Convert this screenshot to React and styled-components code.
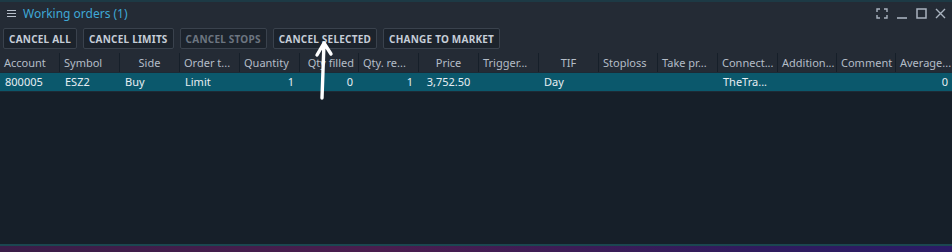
import React from 'react';
import styled, { createGlobalStyle } from 'styled-components';

const Global = createGlobalStyle`
	html, body { margin: 0; padding: 0; background: #161f29; }
	body { font-family: "Noto Sans", "Open Sans", sans-serif; }
`;

const columns = [
	{ title: 'Account', w: 60, h: 'left', d: 'left' },
	{ title: 'Symbol', w: 60, h: 'left', d: 'left' },
	{ title: 'Side', w: 60, h: 'center', d: 'left' },
	{ title: 'Order t...', w: 60, h: 'left', d: 'left' },
	{ title: 'Quantity', w: 60, h: 'left', d: 'right' },
	{ title: 'Qty filled', w: 59, h: 'right', d: 'right' },
	{ title: 'Qty. re...', w: 60, h: 'left', d: 'right' },
	{ title: 'Price', w: 60, h: 'center', d: 'center' },
	{ title: 'Trigger...', w: 60, h: 'left', d: 'left' },
	{ title: 'TIF', w: 60, h: 'center', d: 'left' },
	{ title: 'Stoploss', w: 59, h: 'left', d: 'left' },
	{ title: 'Take pr...', w: 60, h: 'left', d: 'left' },
	{ title: 'Connect...', w: 60, h: 'left', d: 'left' },
	{ title: 'Addition...', w: 59, h: 'left', d: 'left' },
	{ title: 'Comment', w: 59, h: 'left', d: 'left' },
	{ title: 'Average...', w: 58, h: 'left', d: 'right' },
];

const row = ['800005', 'ESZ2', 'Buy', 'Limit', '1', '0', '1', '3,752.50', '', 'Day', '', '', 'TheTra...', '', '', '0'];

const buttons = [
	{ label: 'CANCEL ALL' },
	{ label: 'CANCEL LIMITS' },
	{ label: 'CANCEL STOPS', disabled: true },
	{ label: 'CANCEL SELECTED' },
	{ label: 'CHANGE TO MARKET' },
];

export default function App() {
	return (
		<Panel>
			<Global />
			<TitleBar>
				<Burger>
					<span />
					<span />
					<span />
				</Burger>
				<Title>Working orders (1)</Title>
				<Controls>
					<svg width="12" height="11" viewBox="0 0 12 11" fill="none" stroke="#a9b3bf" strokeWidth="1.4">
						<path d="M1 4V1h3M8 1h3v3M11 7v3H8M4 10H1V7" />
					</svg>
					<svg width="12" height="11" viewBox="0 0 12 11" fill="none" stroke="#a9b3bf" strokeWidth="1.6">
						<path d="M1 10h10" />
					</svg>
					<svg width="11" height="11" viewBox="0 0 11 11" fill="none" stroke="#a9b3bf" strokeWidth="1.5">
						<rect x="1" y="1" width="9" height="9" />
					</svg>
					<svg width="11" height="11" viewBox="0 0 11 11" fill="none" stroke="#a9b3bf" strokeWidth="1.4">
						<path d="M1 1l9 9M10 1l-9 9" />
					</svg>
				</Controls>
			</TitleBar>
			<Toolbar>
				{buttons.map((b) => (
					<Button key={b.label} $disabled={b.disabled}>
						{b.label}
					</Button>
				))}
			</Toolbar>
			<Grid>
				<HeadRow>
					{columns.map((c) => (
						<HeadCell key={c.title} $w={c.w} $align={c.h}>
							{c.title}
						</HeadCell>
					))}
				</HeadRow>
				<DataRow>
					{columns.map((c, i) => (
						<Cell key={c.title} $w={c.w} $align={c.d}>
							{row[i]}
						</Cell>
					))}
				</DataRow>
				<Empty />
			</Grid>
			<Footer />
			<Arrow width="30" height="66" viewBox="0 0 30 66" fill="none" stroke="#ffffff" strokeWidth="3.4" strokeLinecap="round">
				<path d="M13 60L15 5M15 5L8 17M15 5L22 16" />
			</Arrow>
		</Panel>
	);
}

const Panel = styled.div`
	position: relative;
	width: 952px;
	height: 252px;
	display: flex;
	flex-direction: column;
	background: #161f29;
	border-top: 2px solid #1d3a45;
	box-sizing: border-box;
	overflow: hidden;
`;

const TitleBar = styled.div`
	height: 22px;
	display: flex;
	align-items: center;
	padding: 0 6px 0 7px;
	background: #242b35;
`;

const Burger = styled.div`
	width: 9px;
	display: flex;
	flex-direction: column;
	gap: 2px;
	margin-right: 7px;
	span {
		height: 1px;
		background: #b8c0cb;
	}
`;

const Title = styled.div`
	color: #3fa8d6;
	font-size: 12px;
`;

const Controls = styled.div`
	margin-left: auto;
	display: flex;
	align-items: center;
	gap: 8px;
	svg {
		display: block;
	}
`;

const Toolbar = styled.div`
	height: 29px;
	display: flex;
	align-items: center;
	gap: 6px;
	padding: 0 3px;
	background: #242b35;
	box-sizing: border-box;
`;

const Button = styled.div`
	height: 21px;
	display: flex;
	align-items: center;
	padding: 0 5px;
	border: 1px solid #3a424d;
	border-radius: 2px;
	background: #1c232c;
	color: ${(p) => (p.$disabled ? '#6c7580' : '#c5cdd7')};
	font-size: 10px;
	font-weight: 700;
	letter-spacing: 0.22px;
	box-sizing: border-box;
	white-space: nowrap;
`;

const Grid = styled.div`
	flex: 1;
	display: flex;
	flex-direction: column;
`;

const HeadRow = styled.div`
	height: 19px;
	display: flex;
	background: #242b35;
`;

const HeadCell = styled.div`
	width: ${(p) => p.$w}px;
	flex: none;
	box-sizing: border-box;
	padding: 0 4px;
	border-right: 1px solid #161f29;
	color: #b4bdc8;
	font-size: 11px;
	line-height: 19px;
	text-align: ${(p) => p.$align};
	white-space: nowrap;
	overflow: hidden;
	&:last-child {
		border-right: none;
	}
`;

const DataRow = styled.div`
	height: 18px;
	display: flex;
	background: #0b586c;
	border-top: 1px solid #1d2a35;
`;

const Cell = styled.div`
	width: ${(p) => p.$w}px;
	flex: none;
	box-sizing: border-box;
	padding: 0 6px 0 5px;
	color: #e8eef3;
	font-size: 11px;
	line-height: 18px;
	text-align: ${(p) => p.$align};
	white-space: nowrap;
	overflow: hidden;
`;

const Empty = styled.div`
	flex: 1;
	border-top: 1px solid #1d2a35;
`;

const Footer = styled.div`
	height: 8px;
	flex: none;
	box-sizing: border-box;
	border-top: 2px solid #1b4650;
	background: linear-gradient(90deg, #3a1d48, #4a1d4e 40%, #2f1b5e 80%, #2b1b66);
`;

const Arrow = styled.svg`
	position: absolute;
	left: 309px;
	top: 36px;
`;
